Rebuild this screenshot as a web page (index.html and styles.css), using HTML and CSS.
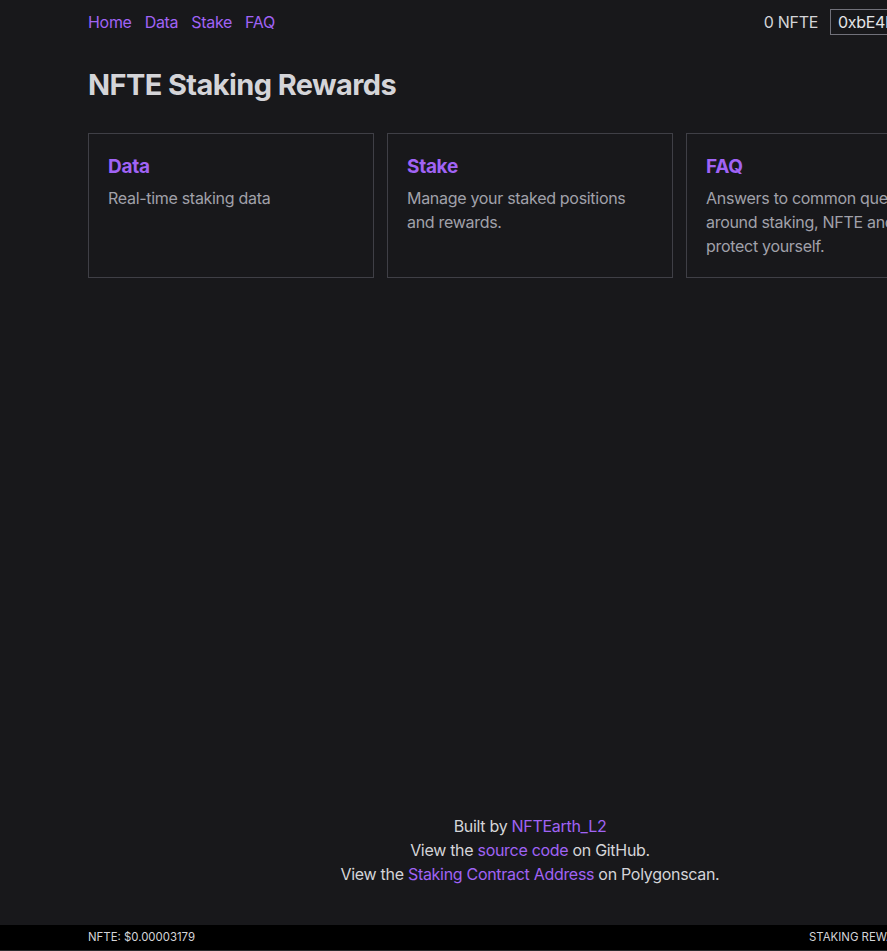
FILE: index.html
```html
<!DOCTYPE html>
<html lang="en">
<head>
<meta charset="utf-8">
<title>NFTE Staking Rewards</title>
<link rel="stylesheet" href="styles.css">
</head>
<body>
<div class="page">
  <header class="wrap nav">
    <nav class="links">
      <a href="#">Home</a>
      <a href="#">Data</a>
      <a href="#">Stake</a>
      <a href="#">FAQ</a>
    </nav>
    <div class="account">
      <span class="balance">0 NFTE</span>
      <button class="wallet">0xbE4F…A1c9</button>
    </div>
  </header>

  <main class="wrap main">
    <h1 class="title">NFTE Staking Rewards</h1>
    <div class="cards">
      <a class="card" href="#">
        <h2 class="card-title">Data</h2>
        <p class="card-text">Real-time staking data</p>
      </a>
      <a class="card" href="#">
        <h2 class="card-title">Stake</h2>
        <p class="card-text">Manage your staked positions and rewards.</p>
      </a>
      <a class="card" href="#">
        <h2 class="card-title">FAQ</h2>
        <p class="card-text">Answers to common questions around staking, NFTE and how to protect yourself.</p>
      </a>
    </div>
  </main>

  <footer class="wrap credits">
    <p>Built by <a href="#">NFTEarth_L2</a></p>
    <p>View the <a href="#">source code</a> on GitHub.</p>
    <p>View the <a href="#">Staking Contract Address</a> on Polygonscan.</p>
  </footer>

  <div class="bar">
    <div class="wrap bar-inner">
      <span>NFTE: $0.00003179</span>
      <span class="bar-right">STAKING REWARDS APR: 12%</span>
    </div>
  </div>
</div>
</body>
</html>
```
FILE: styles.css
```css
html, body {
  margin: 0;
  padding: 0;
  overflow: hidden;
  background: #18181b;
}
body {
  font-family: Inter, "Noto Sans", sans-serif;
  color: #d4d4d8;
  font-size: 16px;
  line-height: 24px;
  letter-spacing: -0.3px;
}
a { color: #a063f5; text-decoration: none; }
p, h1, h2 { margin: 0; }

.page {
  height: 951px;
  display: flex;
  flex-direction: column;
  width: 1060px;
}
.wrap {
  width: 884px;
  margin-left: 88px;
  box-sizing: border-box;
}

.nav {
  display: flex;
  justify-content: space-between;
  align-items: center;
  height: 44px;
}
.links { display: flex; gap: 13px; }
.account { display: flex; align-items: center; gap: 12px; }
.balance { color: #d4d4d8; }
.wallet {
  font: inherit;
  letter-spacing: -0.3px;
  color: #e4e4e7;
  background: #18181b;
  border: 1px solid #71717a;
  height: 26px;
  line-height: 24px;
  padding: 0 7px;
  width: 142px;
  text-align: left;
}

.main { flex: 1; }
.title {
  font-size: 29px;
  line-height: 36px;
  font-weight: 700;
  color: #d4d4d8;
  margin-top: 23px;
  letter-spacing: -0.6px;
}
.cards {
  display: grid;
  grid-template-columns: repeat(3, 286px);
  gap: 13px;
  margin-top: 30px;
}
.card {
  display: block;
  border: 1px solid #3f3f46;
  padding: 19px;
  height: 145px;
  box-sizing: border-box;
}
.card-title {
  font-size: 19px;
  line-height: 28px;
  font-weight: 700;
  color: #a063f5;
  letter-spacing: -0.3px;
}
.card-text {
  margin-top: 5px;
  color: #a1a1aa;
}

.credits {
  text-align: center;
  color: #d4d4d8;
  padding-bottom: 39px;
}

.bar {
  background: #000;
  height: 26px;
  border-bottom: 1px solid #2a2a2e;
  box-sizing: border-box;
}
.bar-inner {
  display: flex;
  justify-content: space-between;
  font-size: 11.4px;
  line-height: 25px;
  color: #d4d4d8;
  letter-spacing: 0;
}
```
